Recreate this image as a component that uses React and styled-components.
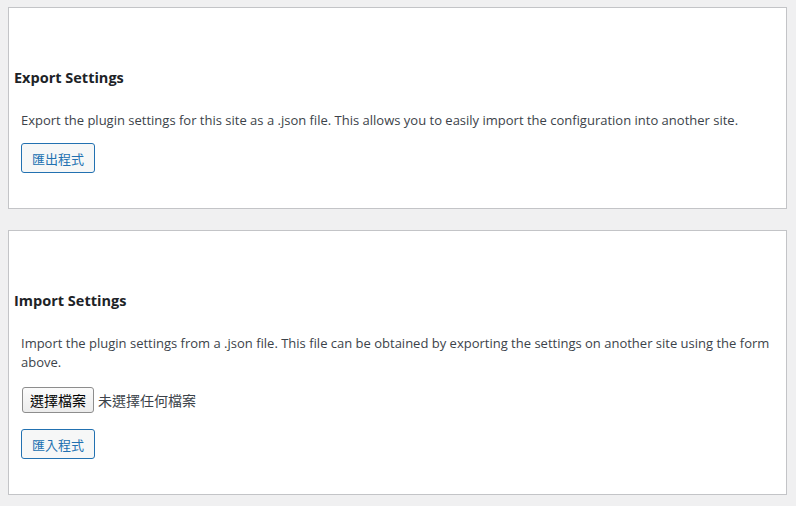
import React from 'react'
import styled, { createGlobalStyle } from 'styled-components'

const GlobalStyle = createGlobalStyle`
  html, body {
    margin: 0;
    padding: 0;
    background: #f0f0f1;
  }
  body {
    font-family: "Open Sans", "Noto Sans CJK TC", sans-serif;
    color: #3c434a;
    font-size: 13px;
  }
`

const Page = styled.div`
  display: flex;
  flex-direction: column;
  gap: 21px;
  padding: 7px 9px 10px 8px;
`

const Panel = styled.section`
  background: #fff;
  border: 1px solid #c3c4c7;
  padding: 60px 6px 35px 5px;
`

const Heading = styled.h2`
  margin: 0 0 23px;
  font-size: 14.5px;
  line-height: 20px;
  font-weight: 700;
  color: #1d2327;
`

const Body = styled.div`
  padding: 0 7px;
  display: flex;
  flex-direction: column;
  align-items: flex-start;
`

const Description = styled.p`
  margin: 0 0 13px;
  font-size: 13px;
  line-height: 19px;
  color: #3c434a;
`

const OutlineButton = styled.button`
  height: 30px;
  padding: 0 10px;
  font-family: "Noto Sans CJK TC", sans-serif;
  font-size: 13px;
  color: #2271b1;
  background: #f6f7f7;
  border: 1px solid #2271b1;
  border-radius: 3px;
  cursor: pointer;
`

const FileRow = styled.div`
  display: flex;
  align-items: center;
  gap: 4px;
  margin: 2px 0 16px 1px;
`

const FileButton = styled.label`
  display: inline-flex;
  align-items: center;
  height: 26px;
  box-sizing: border-box;
  padding: 0 7px;
  font-family: "Noto Sans CJK TC", sans-serif;
  font-size: 14px;
  color: #000;
  background: linear-gradient(#fbfbfb, #ececec);
  border: 1px solid #8d8d8d;
  border-radius: 3px;
`

const FileStatus = styled.span`
  font-family: "Noto Sans CJK TC", sans-serif;
  font-size: 14px;
  color: #3c434a;
`

const SettingsPanel = ({ title, text, children }) => (
  <Panel>
    <Heading>{title}</Heading>
    <Body>
      <Description>{text}</Description>
      {children}
    </Body>
  </Panel>
)

export default function App() {
  return (
    <>
      <GlobalStyle />
      <Page>
        <SettingsPanel
          title="Export Settings"
          text="Export the plugin settings for this site as a .json file. This allows you to easily import the configuration into another site."
        >
          <OutlineButton>匯出程式</OutlineButton>
        </SettingsPanel>
        <SettingsPanel
          title="Import Settings"
          text="Import the plugin settings from a .json file. This file can be obtained by exporting the settings on another site using the form above."
        >
          <FileRow>
            <FileButton>選擇檔案</FileButton>
            <FileStatus>未選擇任何檔案</FileStatus>
          </FileRow>
          <OutlineButton>匯入程式</OutlineButton>
        </SettingsPanel>
      </Page>
    </>
  )
}
